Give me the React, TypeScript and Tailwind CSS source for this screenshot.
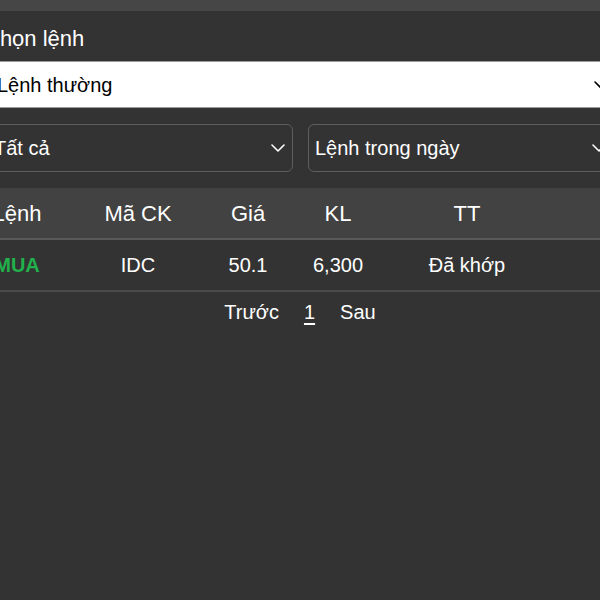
import React from "react";

function Chevron({ className }: { className?: string }) {
  return (
    <svg width="14" height="8" viewBox="0 0 14 8" className={className} fill="none">
      <path d="M1 1l6 6 6-6" stroke="currentColor" strokeWidth="1.6" strokeLinecap="round" strokeLinejoin="round" />
    </svg>
  );
}

export default function App() {
  const font = { fontFamily: '"Liberation Sans", Arial, sans-serif' };
  return (
    <div className="w-[600px] h-[600px] overflow-hidden bg-[#333333]" style={font}>
      <div className="h-[11px] bg-[#464646]" />
      <div className="ml-[-14px] w-[628px]">
        <div className="h-[50px] flex items-center text-[22px] text-white leading-none pt-[6px] ml-[-2px]">Chọn lệnh</div>
        <div className="h-[47px] bg-white border border-[#9a9a9a] flex items-center justify-between pl-[10px] pr-[5px] text-[20px] text-black">
          <span>Lệnh thường</span>
          <Chevron className="text-black" />
        </div>
        <div className="mt-[16px] flex gap-[15px]">
          <div className="flex-1 h-[48px] rounded-[6px] border border-[#5e5e5e] flex items-center justify-between pl-[7px] pr-[7px] text-[20px] text-white">
            <span>Tất cả</span>
            <Chevron className="text-white" />
          </div>
          <div className="flex-1 h-[48px] rounded-[6px] border border-[#5e5e5e] flex items-center justify-between pl-[6px] pr-[7px] text-[20px] text-white">
            <span>Lệnh trong ngày</span>
            <Chevron className="text-white" />
          </div>
        </div>
        <div className="mt-[16px] grid grid-cols-[62px_180px_40px_140px_118px_1fr] h-[52px] bg-[#424242] border-b-2 border-[#5a5a5a] items-center text-[22px] text-white text-center">
          <div>Lệnh</div>
          <div>Mã CK</div>
          <div>Giá</div>
          <div>KL</div>
          <div>TT</div>
          <div />
        </div>
        <div className="grid grid-cols-[62px_180px_40px_140px_118px_1fr] h-[52px] border-b-2 border-[#4a4a4a] items-center text-[20px] text-white text-center">
          <div className="text-[#22b04b] font-bold">MUA</div>
          <div>IDC</div>
          <div>50.1</div>
          <div>6,300</div>
          <div>Đã khớp</div>
          <div />
        </div>
      </div>
      <div className="flex justify-center items-center gap-[25px] h-[40px] text-[20px] text-white">
        <span>Trước</span>
        <span className="underline underline-offset-4">1</span>
        <span>Sau</span>
      </div>
    </div>
  );
}
